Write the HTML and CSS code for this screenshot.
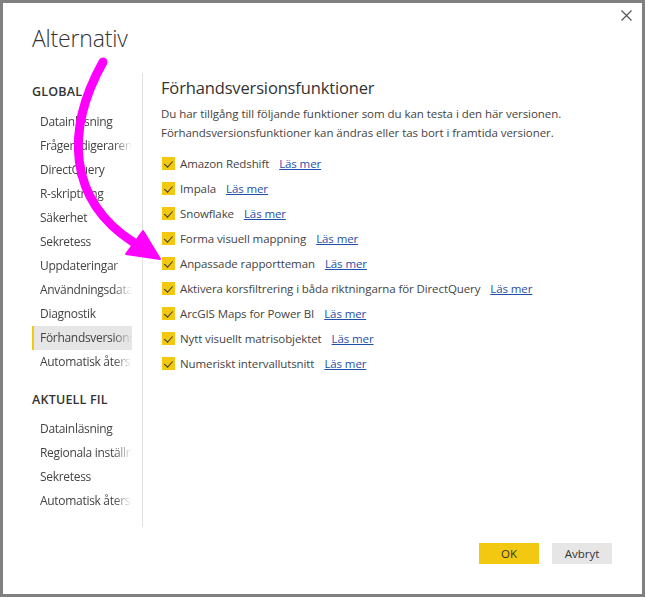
FILE: index.html
```html
<!DOCTYPE html>
<html lang="sv">
<head>
<meta charset="utf-8">
<title>Alternativ</title>
<link rel="stylesheet" href="styles.css">
</head>
<body>
<div class="dialog">
  <header class="header">
    <h1 class="title">Alternativ</h1>
    <button class="close" aria-label="Stäng">
      <svg width="11" height="11" viewBox="0 0 11 11"><path d="M0.5 0.5 L10.5 10.5 M10.5 0.5 L0.5 10.5" stroke="#555" stroke-width="1.2" fill="none"/></svg>
    </button>
  </header>
  <div class="main">
    <nav class="nav">
      <div class="nav-heading">GLOBAL</div>
      <ul class="nav-list">
        <li class="nav-item"><span>Datainläsning</span></li>
        <li class="nav-item"><span>Frågeredigeraren</span></li>
        <li class="nav-item"><span>DirectQuery</span></li>
        <li class="nav-item"><span>R-skriptning</span></li>
        <li class="nav-item"><span>Säkerhet</span></li>
        <li class="nav-item"><span>Sekretess</span></li>
        <li class="nav-item"><span>Uppdateringar</span></li>
        <li class="nav-item"><span>Användningsdata</span></li>
        <li class="nav-item"><span>Diagnostik</span></li>
        <li class="nav-item selected"><span>Förhandsversionsfunktioner</span></li>
        <li class="nav-item"><span>Automatisk återställning</span></li>
      </ul>
      <div class="nav-heading second">AKTUELL FIL</div>
      <ul class="nav-list">
        <li class="nav-item"><span>Datainläsning</span></li>
        <li class="nav-item"><span>Regionala inställningar</span></li>
        <li class="nav-item"><span>Sekretess</span></li>
        <li class="nav-item"><span>Automatisk återställning</span></li>
      </ul>
    </nav>
    <section class="content">
      <h2 class="content-title">Förhandsversionsfunktioner</h2>
      <p class="desc">Du har tillgång till följande funktioner som du kan testa i den här versionen.<br>Förhandsversionsfunktioner kan ändras eller tas bort i framtida versioner.</p>
      <ul class="features">
        <li class="feature"><span class="check"></span><span class="label">Amazon Redshift</span><a class="more" href="#">Läs mer</a></li>
        <li class="feature"><span class="check"></span><span class="label">Impala</span><a class="more" href="#">Läs mer</a></li>
        <li class="feature"><span class="check"></span><span class="label">Snowflake</span><a class="more" href="#">Läs mer</a></li>
        <li class="feature"><span class="check"></span><span class="label">Forma visuell mappning</span><a class="more" href="#">Läs mer</a></li>
        <li class="feature"><span class="check"></span><span class="label">Anpassade rapportteman</span><a class="more" href="#">Läs mer</a></li>
        <li class="feature"><span class="check"></span><span class="label">Aktivera korsfiltrering i båda riktningarna för DirectQuery</span><a class="more" href="#">Läs mer</a></li>
        <li class="feature"><span class="check"></span><span class="label">ArcGIS Maps for Power BI</span><a class="more" href="#">Läs mer</a></li>
        <li class="feature"><span class="check"></span><span class="label">Nytt visuellt matrisobjektet</span><a class="more" href="#">Läs mer</a></li>
        <li class="feature"><span class="check"></span><span class="label">Numeriskt intervallutsnitt</span><a class="more" href="#">Läs mer</a></li>
      </ul>
    </section>
  </div>
  <footer class="footer">
    <button class="btn primary">OK</button>
    <button class="btn">Avbryt</button>
  </footer>
  <svg class="arrow" width="645" height="597" viewBox="0 0 645 597">
    <path d="M103 62 C 65 130 68 200 133 242" stroke="#ff00ff" stroke-width="9" stroke-linecap="round" fill="none"/>
    <polygon points="143,231 160,259 126,254" fill="#ff00ff" stroke="#ff00ff" stroke-width="2" stroke-linejoin="round"/>
  </svg>
</div>
</body>
</html>
```
FILE: styles.css
```css
* { box-sizing: border-box; }
html, body { margin: 0; padding: 0; background: #fff; }
body { font-family: "Open Sans", "Noto Sans", sans-serif; color: #444; }

.dialog {
  position: relative;
  width: 645px;
  height: 597px;
  border: 3px solid #808080;
  background: #fff;
  display: flex;
  flex-direction: column;
}

.header {
  display: flex;
  justify-content: space-between;
  align-items: flex-start;
  height: 70px;
  padding: 0 0 0 29px;
}
.title {
  margin: 18px 0 0 0;
  font-size: 23px;
  font-weight: 300;
  line-height: 34px;
  letter-spacing: -0.2px;
  color: #333;
}
.close {
  border: 0;
  background: none;
  padding: 0;
  margin: 7px 10px 0 0;
  width: 11px;
  height: 11px;
  display: flex;
}

.main {
  display: flex;
  height: 454px;
}
.nav {
  width: 140px;
  padding: 9px 0 0 29px;
  border-right: 1px solid #e1e1e1;
}
.nav-heading {
  font-size: 12.5px;
  font-weight: 600;
  line-height: 20px;
  letter-spacing: 0.2px;
  color: #333;
  margin-bottom: 8px;
}
.nav-heading.second { margin-top: 16px; margin-bottom: 7px; }
.nav-list { list-style: none; margin: 0; padding: 0; }
.nav-item {
  width: 100px;
  height: 24px;
  line-height: 24px;
  font-size: 12px;
  letter-spacing: -0.3px;
  padding-left: 6px;
  white-space: nowrap;
  overflow: hidden;
  border-left: 2px solid transparent;
  color: #444;
}
.nav-item span {
  display: block;
  overflow: hidden;
  -webkit-mask-image: linear-gradient(to right, #000 80%, transparent 100%);
  mask-image: linear-gradient(to right, #000 80%, transparent 100%);
}
.nav-item.selected {
  background: #e6e6e6;
  border-left-color: #f2c811;
}

.content {
  padding: 3px 0 0 18px;
  flex: 1;
}
.content-title {
  margin: 0;
  font-size: 16.5px;
  font-weight: 400;
  line-height: 24px;
  letter-spacing: -0.15px;
  color: #333;
}
.desc {
  margin: 4px 0 0 0;
  font-size: 11.5px;
  line-height: 19px;
  letter-spacing: -0.05px;
  color: #444;
}
.features { list-style: none; margin: 9px 0 0 0; padding: 0; }
.feature {
  display: flex;
  align-items: center;
  height: 25px;
  font-size: 11.5px;
  letter-spacing: -0.1px;
}
.check {
  width: 13px;
  height: 13px;
  margin-left: 1px;
  background: #f2c811;
  position: relative;
  flex: none;
}
.check::after {
  content: "";
  position: absolute;
  left: 4px;
  top: 1.5px;
  width: 3.5px;
  height: 7px;
  border: solid #333;
  border-width: 0 1.6px 1.6px 0;
  transform: rotate(42deg);
}
.label { margin-left: 5px; color: #444; }
.more {
  margin-left: 10px;
  color: #1f4fa8;
  text-decoration: underline;
}

.footer {
  display: flex;
  justify-content: flex-end;
  gap: 13px;
  padding: 16px 30px 0 0;
}
.btn {
  width: 60px;
  height: 21px;
  border: 0;
  padding: 0;
  font-family: inherit;
  font-size: 11.5px;
  color: #333;
  background: #e6e6e6;
}
.btn.primary { background: #f2c811; }

.arrow {
  position: absolute;
  left: -3px;
  top: -3px;
  pointer-events: none;
}
```
